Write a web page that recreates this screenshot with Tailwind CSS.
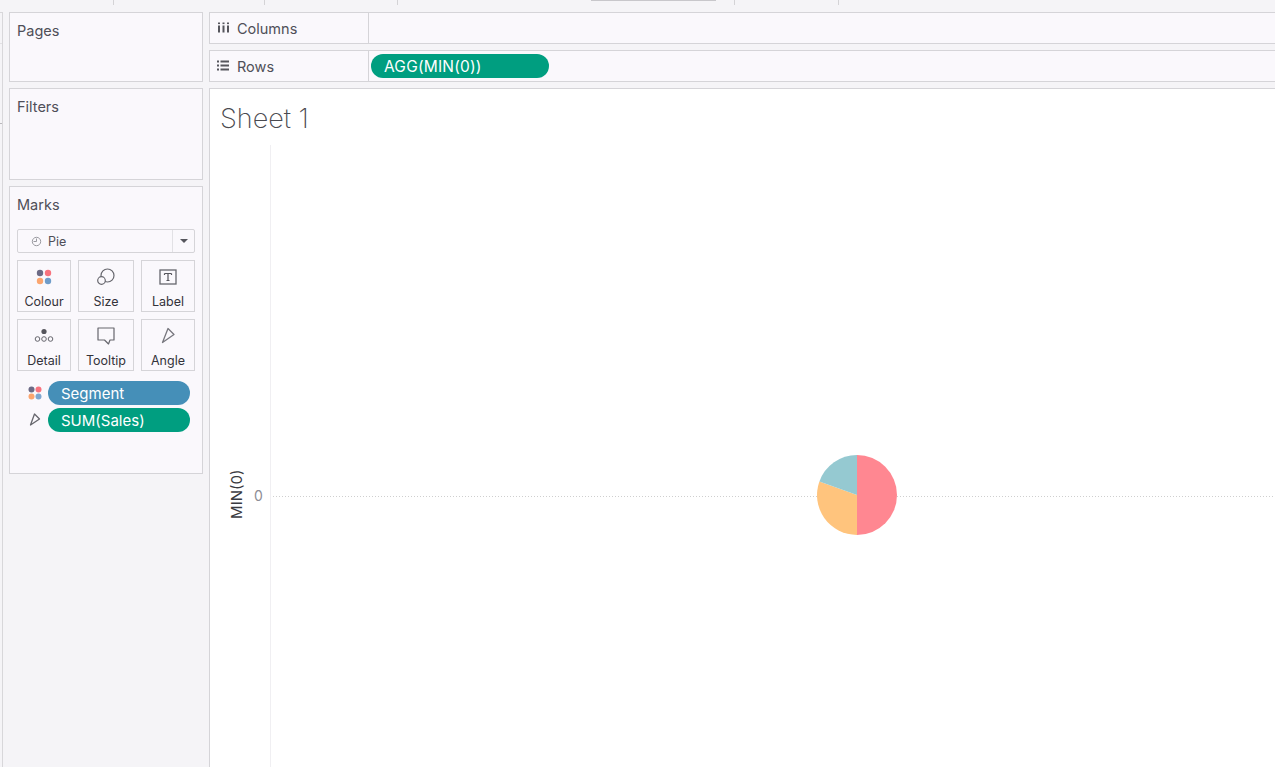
<!DOCTYPE html>
<html lang="en">
<head>
    <meta charset="UTF-8">
    <title>Sheet 1</title>
    <script src="https://cdn.jsdelivr.net/npm/@tailwindcss/browser@4"></script>
</head>
<body class="w-[1275px] h-[767px] overflow-hidden bg-[#f5f4f7] font-['Inter','Liberation_Sans',sans-serif] text-[#4f4f58]">
    <div class="flex flex-col h-full">
        <!-- top strip -->
        <div class="h-[12px] shrink-0 flex">
            <div class="w-[114px] h-[5px] border-r border-[#d4d3d6]"></div>
            <div class="w-[151px] h-[5px] border-r border-[#d4d3d6]"></div>
            <div class="w-[133px] h-[5px] border-r border-[#d4d3d6]"></div>
            <div class="w-[193px] h-px"></div>
            <div class="w-[125px] h-px bg-[#c8c7cb]"></div>
            <div class="w-[19px] h-[5px] border-r border-[#d4d3d6]"></div>
            <div class="w-[104px] h-[5px] border-r border-[#d4d3d6]"></div>
        </div>

        <div class="flex flex-1 min-h-0">
            <!-- left shelves -->
            <div class="w-[209px] shrink-0 flex flex-col pl-[9px] pr-[6px] gap-[6px]">
                <div class="h-[70px] border border-[#d5d4d8] bg-[#faf8fc] px-[7px] pt-[9px] text-[14.5px] leading-[18px]">Pages</div>
                <div class="h-[92px] border border-[#d5d4d8] bg-[#faf8fc] px-[7px] pt-[9px] text-[14.5px] leading-[18px]">Filters</div>
                <div class="h-[288px] border border-[#d5d4d8] bg-[#faf8fc] px-[7px] pt-[9px]">
                    <div class="text-[14.5px] leading-[18px]">Marks</div>
                    <div class="mt-[15px] h-[24px] w-[178px] border border-[#d5d4d8] rounded-[2px] flex items-center">
                        <svg class="ml-[13px]" width="11" height="11" viewBox="0 0 11 11" fill="none" stroke="#9a9aa0"><circle cx="5.5" cy="5.5" r="4.2"/><path d="M5.5 2.5v3H2.5"/></svg>
                        <span class="ml-[6px] text-[12.5px] leading-[24px] pt-px flex-1">Pie</span>
                        <div class="w-[22px] h-[22px] border-l border-[#e2e1e5] flex items-center justify-center">
                            <div class="w-0 h-0 border-x-[4px] border-x-transparent border-t-[4px] border-t-[#55555c]"></div>
                        </div>
                    </div>
                    <div class="mt-[7px] w-[178px] grid grid-cols-[54px_56px_54px] gap-x-[7px] gap-y-[7px] text-[#33333a]">
                        <div class="h-[52px] border border-[#d5d4d8] flex flex-col items-center">
                            <svg class="mt-[7px]" width="18" height="18" viewBox="0 0 18 18"><circle cx="5" cy="5" r="3.2" fill="#6c6a85"/><circle cx="13" cy="5" r="3.2" fill="#f8737e"/><circle cx="5" cy="13" r="3.2" fill="#fba56f"/><circle cx="13" cy="13" r="3.2" fill="#6f9cc9"/></svg>
                            <span class="mt-[8px] text-[12.5px] leading-[16px]">Colour</span>
                        </div>
                        <div class="h-[52px] border border-[#d5d4d8] flex flex-col items-center">
                            <svg class="mt-[7px]" width="20" height="18" viewBox="0 0 20 18" fill="none" stroke="#66666d" stroke-width="1.2"><circle cx="11.5" cy="7.5" r="6.5"/><circle cx="5.5" cy="12.5" r="3.8" fill="#faf8fc"/></svg>
                            <span class="mt-[8px] text-[12.5px] leading-[16px]">Size</span>
                        </div>
                        <div class="h-[52px] border border-[#d5d4d8] flex flex-col items-center">
                            <svg class="mt-[7px]" width="18" height="18" viewBox="0 0 18 18" fill="none"><rect x="1" y="2" width="16" height="14" stroke="#66666d" stroke-width="1.3"/><path d="M5.5 5.5h7M9 5.5v7M7.5 12.5h3M5.5 5.5v1.5M12.5 5.5v1.5" stroke="#55555c" stroke-width="1.2"/></svg>
                            <span class="mt-[8px] text-[12.5px] leading-[16px]">Label</span>
                        </div>
                        <div class="h-[52px] border border-[#d5d4d8] flex flex-col items-center">
                            <svg class="mt-[7px]" width="20" height="18" viewBox="0 0 20 18" fill="none" stroke="#66666d"><circle cx="10" cy="4.5" r="2.6" fill="#55555c" stroke="none"/><circle cx="3.5" cy="12" r="2.3"/><circle cx="10" cy="12" r="2.3"/><circle cx="16.5" cy="12" r="2.3"/></svg>
                            <span class="mt-[8px] text-[12.5px] leading-[16px]">Detail</span>
                        </div>
                        <div class="h-[52px] border border-[#d5d4d8] flex flex-col items-center">
                            <svg class="mt-[7px]" width="20" height="18" viewBox="0 0 20 18" fill="none" stroke="#66666d" stroke-width="1.2"><path d="M2 1h16v12h-4l-1.5 4-4-4H2z" stroke-linejoin="round"/></svg>
                            <span class="mt-[8px] text-[12.5px] leading-[16px]">Tooltip</span>
                        </div>
                        <div class="h-[52px] border border-[#d5d4d8] flex flex-col items-center">
                            <svg class="mt-[7px]" width="18" height="18" viewBox="0 0 18 18" fill="none" stroke="#77777e" stroke-width="1.3"><path d="M9 1.5 15 7.5 3.5 15.5z" stroke-linejoin="round"/></svg>
                            <span class="mt-[8px] text-[12.5px] leading-[16px]">Angle</span>
                        </div>
                    </div>
                    <div class="mt-[10px] flex flex-col gap-[3px]">
                        <div class="flex items-center h-[24px]">
                            <svg class="ml-[10px]" width="16" height="16" viewBox="0 0 16 16"><circle cx="4.5" cy="4.5" r="3" fill="#6c6a85"/><circle cx="11.5" cy="4.5" r="3" fill="#f8737e"/><circle cx="4.5" cy="11.5" r="3" fill="#fba56f"/><circle cx="11.5" cy="11.5" r="3" fill="#7fa6cf"/></svg>
                            <div class="ml-[5px] w-[142px] h-[24px] rounded-full bg-[#458fb8] text-white text-[15px] leading-[25px] pl-[13px]">Segment</div>
                        </div>
                        <div class="flex items-center h-[24px]">
                            <svg class="ml-[12px]" width="12" height="14" viewBox="0 0 12 14" fill="none" stroke="#66666d" stroke-width="1.3"><path d="M5.5 1 10.5 6 1.5 12z" stroke-linejoin="round"/></svg>
                            <div class="ml-[7px] w-[142px] h-[24px] rounded-full bg-[#009e80] text-white text-[15px] leading-[25px] pl-[13px]">SUM(Sales)</div>
                        </div>
                    </div>
                </div>
            </div>

            <!-- right side -->
            <div class="flex-1 min-w-0 flex flex-col gap-[6px]">
                <div class="h-[32px] border border-r-0 border-[#d5d4d8] bg-[#faf8fc] flex">
                    <div class="w-[159px] border-r border-[#d5d4d8] flex items-center">
                        <svg class="ml-[8px] -mt-[2px]" width="11" height="11" viewBox="0 0 11 11" fill="#55555c"><rect x="0" y="0.5" width="2" height="1.6"/><rect x="4.5" y="0.5" width="2" height="1.6"/><rect x="9" y="0.5" width="2" height="1.6"/><rect x="0" y="3.5" width="2" height="7"/><rect x="4.5" y="3.5" width="2" height="7"/><rect x="9" y="3.5" width="2" height="7"/></svg>
                        <span class="ml-[8px] text-[14.5px] leading-[20px] pt-[2px]">Columns</span>
                    </div>
                </div>
                <div class="h-[32px] border border-r-0 border-[#d5d4d8] bg-[#faf8fc] flex">
                    <div class="w-[159px] border-r border-[#d5d4d8] flex items-center">
                        <svg class="ml-[7px] -mt-[2px]" width="12" height="11" viewBox="0 0 12 11" fill="#55555c"><rect x="0" y="0.5" width="2" height="2"/><rect x="3.5" y="0.5" width="8.5" height="2"/><rect x="0" y="4.5" width="2" height="2"/><rect x="3.5" y="4.5" width="8.5" height="2"/><rect x="0" y="8.5" width="2" height="2"/><rect x="3.5" y="8.5" width="8.5" height="2"/></svg>
                        <span class="ml-[8px] text-[14.5px] leading-[20px] pt-[2px]">Rows</span>
                    </div>
                    <div class="ml-[2px] mt-[3px] w-[178px] h-[24px] rounded-full bg-[#009e80] text-white text-[15.5px] tracking-[0.2px] leading-[25px] pl-[13px]">AGG(MIN(0))</div>
                </div>
                <!-- worksheet -->
                <div class="flex-1 min-h-0 border-l border-t border-[#d5d4d8] bg-white relative">
                    <div class="pl-[10px] pt-[13px] text-[27px] leading-[34px] font-extralight text-[#4a4a50]">Sheet 1</div>
                    <div class="absolute left-[60px] top-[56px] bottom-0 w-px bg-[#f0eff2]"></div>
                    <div class="absolute left-[63px] right-0 top-[407px] h-px bg-[repeating-linear-gradient(90deg,#cfcfcf_0,#cfcfcf_1px,transparent_1px,transparent_3px)]"></div>
                    <div class="absolute left-[44px] top-[398px] text-[14px] leading-[18px] text-[#8d8d95]">0</div>
                    <div class="absolute left-[19px] top-[378px] h-[54px] w-[18px] flex items-center justify-center">
                        <span class="block -rotate-90 whitespace-nowrap text-[15px] text-[#3a3a40]">MIN(0)</span>
                    </div>
                    <svg class="absolute left-[606px] top-[365px]" width="82" height="82" viewBox="-41 -41 82 82">
                        <path d="M0 0V-40A40 40 0 0 1 0 40z" fill="#ff8791"/>
                        <path d="M0 0V40A40 40 0 0 1 -37.6 -13.6z" fill="#ffc47d"/>
                        <path d="M0 0L-37.6 -13.6A40 40 0 0 1 0 -40z" fill="#95c9d1"/>
                    </svg>
                </div>
            </div>
        </div>
    </div>
    <!-- left edge of the neighbouring pane -->
    <div class="absolute left-[2px] top-[12px] bottom-0 w-px bg-[#d8d7da]"></div>
    <div class="absolute left-0 top-[12px] w-[2px] h-px bg-[#d8d7da]"></div>
    <div class="absolute left-0 top-[43px] w-[2px] h-px bg-[#e2e1e4]"></div>
    <div class="absolute left-0 top-[123px] w-[2px] h-px bg-[#b9b8bc]"></div>
</body>
</html>
